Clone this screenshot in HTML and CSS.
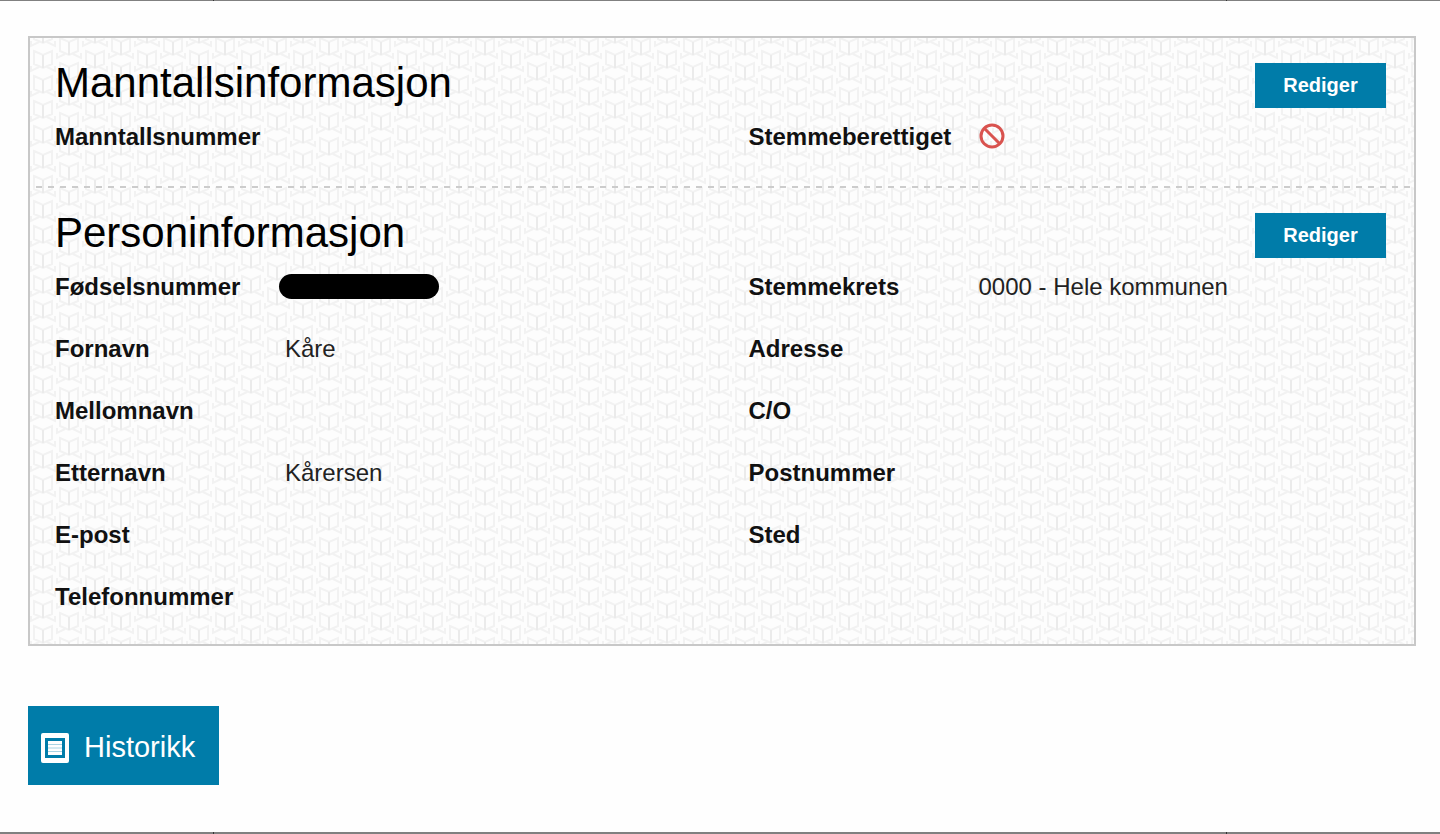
FILE: index.html
```html
<!DOCTYPE html>
<html lang="no">
	<head>
		<meta charset="UTF-8">
		<meta name="viewport" content="width=device-width, initial-scale=1.0">
		<title>Manntall</title>
		<link rel="stylesheet" href="styles.css">
	</head>
	<body>
		<div class="edge edgeTop"><span></span><span></span><span></span></div>

		<main>
			<div class="panel">
				<section class="electoral">
					<header>
						<h2>Manntallsinformasjon</h2>
						<button type="button" class="btn">Rediger</button>
					</header>
					<div class="columns">
						<dl>
							<dt>Manntallsnummer</dt>
							<dd></dd>
						</dl>
						<dl>
							<dt>Stemmeberettiget</dt>
							<dd>
								<svg class="banIcon" viewBox="0 0 26 26" role="img" aria-label="Nei">
									<circle cx="13" cy="13" r="11"/>
									<path d="M5.5 5.5L20.5 20.5"/>
								</svg>
							</dd>
						</dl>
					</div>
				</section>

				<section class="person">
					<header>
						<h2>Personinformasjon</h2>
						<button type="button" class="btn">Rediger</button>
					</header>
					<div class="columns">
						<dl>
							<dt>Fødselsnummer</dt>
							<dd><span class="hidden"></span></dd>
							<dt>Fornavn</dt>
							<dd>Kåre</dd>
							<dt>Mellomnavn</dt>
							<dd></dd>
							<dt>Etternavn</dt>
							<dd>Kårersen</dd>
							<dt>E-post</dt>
							<dd></dd>
							<dt>Telefonnummer</dt>
							<dd></dd>
						</dl>
						<dl>
							<dt>Stemmekrets</dt>
							<dd>0000 - Hele kommunen</dd>
							<dt>Adresse</dt>
							<dd></dd>
							<dt>C/O</dt>
							<dd></dd>
							<dt>Postnummer</dt>
							<dd></dd>
							<dt>Sted</dt>
							<dd></dd>
						</dl>
					</div>
				</section>
			</div>

			<button type="button" class="btn btnLarge">
				<svg class="listIcon" viewBox="0 0 28 30" aria-hidden="true">
					<path class="frame" d="M2 0H26Q28 0 28 2V28Q28 30 26 30H2Q0 30 0 28V2Q0 0 2 0ZM4 5V25H24V5Z"/>
					<path class="lines" d="M7 8H21V22H7Z"/>
					<path class="gaps" d="M7 11.5H21M7 15H21M7 18.5H21"/>
				</svg>
				Historikk
			</button>
		</main>

		<div class="edge edgeBottom"><span></span><span></span><span></span></div>
	</body>
</html>
```

FILE: styles.css
```css
*, html, body {
	box-sizing: border-box;
}

body {
	margin: 0;
	min-height: 100vh;
	display: flex;
	flex-direction: column;
	font-family: "Liberation Sans", Arial, sans-serif;
	font-size: 24px;
	line-height: 30px;
	color: #111;
	background-color: #fefefe;
}

/* thin rules at the top and bottom, with a tick between the cells */
.edge {
	display: grid;
	grid-template-columns: 214px 1fr 213px;
	background-color: #808080;
}

.edge span:not(:last-child) {
	border-right: 1px solid #333;
}

.edgeTop {
	height: 1px;
}

.edgeBottom {
	height: 2px;
}

main {
	flex: 1;
	padding: 35px 24px 40px 28px;
}

.panel {
	border: 2px solid #c8c8c8;
	background-color: #fdfdfd;
	background-image: url("data:image/svg+xml,%3Csvg xmlns='http://www.w3.org/2000/svg' width='52' height='25' viewBox='0 0 52 25'%3E%3Cdefs%3E%3Cg id='c' fill='none' stroke='%23f2f2f2' stroke-width='2'%3E%3Cpath d='M-9 0L0 4L9 0V13L0 17L-9 13ZM-12 15V20L-4 16M12 15V20L4 16'/%3E%3Cpath stroke='%23ebebeb' d='M0 4V17'/%3E%3C/g%3E%3C/defs%3E%3Cuse href='%23c' x='13' y='13'/%3E%3Cuse href='%23c' x='13' y='-12'/%3E%3Cuse href='%23c' x='39'/%3E%3Cuse href='%23c' x='39' y='25'/%3E%3Cuse href='%23c' x='39' y='-25'/%3E%3C/svg%3E");
}

section {
	padding: 21px 28px 0 25px;
}

.electoral {
	height: 148px;
}

.person {
	padding-bottom: 32px;
}

/* dashed divider above the second block */
.person::before {
	content: "";
	display: block;
	height: 2px;
	margin: -21px -28px 21px -19px;
	background-image: repeating-linear-gradient(to right, #ccc 0 6px, transparent 6px 12px);
}

header {
	display: flex;
	justify-content: space-between;
	height: 63px;
}

h2 {
	margin: 0;
	font-size: 42px;
	line-height: 48px;
	font-weight: normal;
	color: #000;
}

.btn {
	border: none;
	font-family: inherit;
	font-size: 20px;
	font-weight: bold;
	color: #fff;
	background-color: #007ca9;
	width: 131px;
	height: 45px;
	margin-top: 4px;
	padding: 0;
	cursor: pointer;
}

.columns {
	display: grid;
	grid-template-columns: 1fr 1fr;
	column-gap: 56px;
}

dl {
	margin: 0;
	display: grid;
	grid-template-columns: 230px 1fr;
	grid-auto-rows: 30px;
	row-gap: 32px;
}

dt {
	font-weight: bold;
}

dd {
	margin: 0;
	color: #222;
	white-space: nowrap;
}

.hidden {
	display: block;
	width: 160px;
	height: 25px;
	margin: 2px 0 0 -6px;
	border-radius: 13px;
	background-color: #000;
}

.banIcon {
	display: block;
	width: 26px;
	height: 26px;
	margin-top: 1px;
	fill: none;
	stroke: #d9534f;
	stroke-width: 3;
}

.btnLarge {
	display: flex;
	align-items: center;
	width: 191px;
	height: 79px;
	margin-top: 60px;
	padding: 4px 0 0 13px;
	gap: 15px;
	font-size: 29px;
	font-weight: normal;
}

.listIcon {
	width: 28px;
	height: 30px;
}

.frame {
	fill: #fff;
	fill-rule: evenodd;
}

.lines {
	fill: #fff;
}

.gaps {
	stroke: #a9d3e3;
	stroke-width: 1;
}
```
